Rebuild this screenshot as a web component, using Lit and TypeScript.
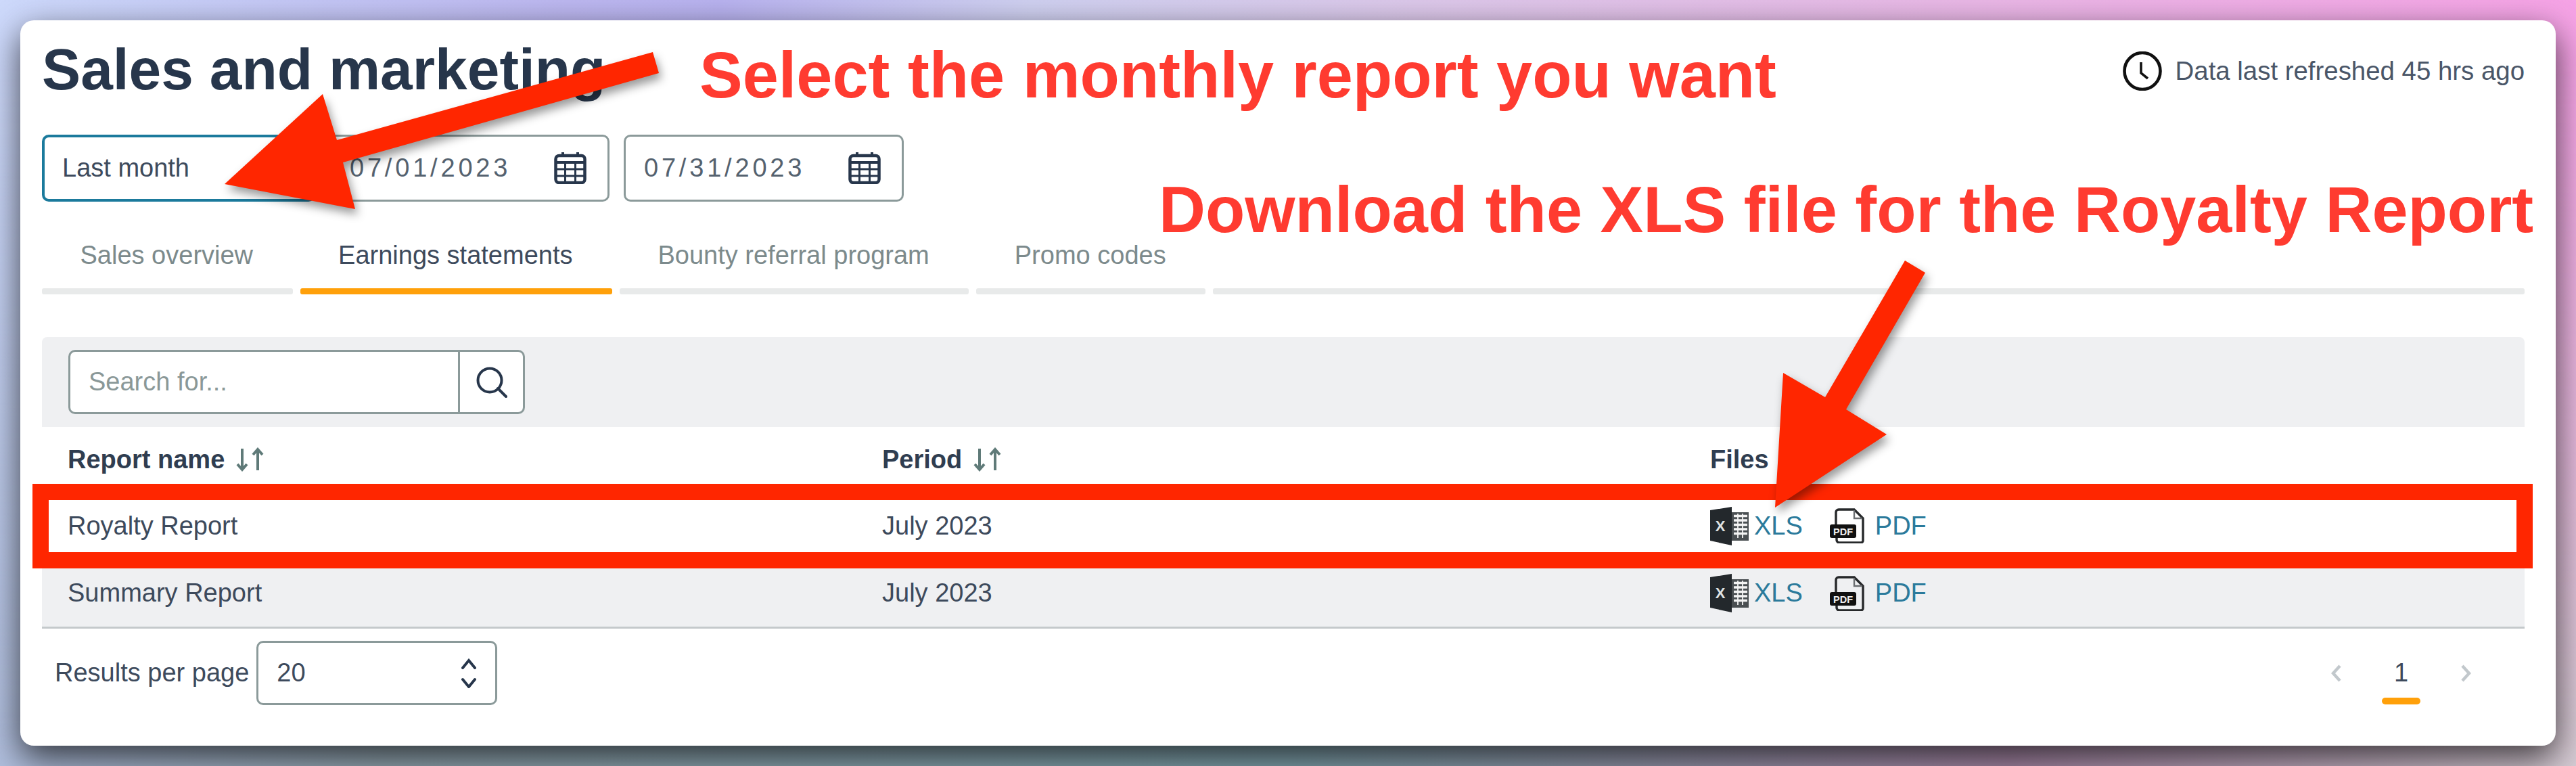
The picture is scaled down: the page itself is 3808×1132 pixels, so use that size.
import { LitElement, html, css, svg } from "lit";
import { customElement } from "lit/decorators.js";

const calendar = html`<svg class="cal" viewBox="0 0 48 47">
  <path d="M13 0v7M35 0v7" stroke="#27364b" stroke-width="4" stroke-linecap="round"/>
  <rect x="2.5" y="5" width="43" height="40" rx="5" fill="#fff" stroke="#27364b" stroke-width="4.5"/>
  <path d="M2 15h44" stroke="#27364b" stroke-width="4"/>
  <path d="M2 25h44M2 35h44M16.500 15v30M31.500 15v30" stroke="#27364b" stroke-width="3"/>
</svg>`;

const sortIcon = html`<svg class="sort" viewBox="0 0 43 36" fill="none" stroke="#5f7a78" stroke-width="4">
  <path d="M10 2v30M3 25l7 8 7-8"/>
  <path d="M33 34V4M26 11l7-8 7 8"/>
</svg>`;

const xlsIcon = html`<svg class="xls" viewBox="0 0 57 57">
  <rect x="30" y="8" width="27" height="42" fill="#4a4f52"/>
  <path d="M35 13.500h20M35 20h20M35 26.500h20M35 33h20M35 39.500h20" stroke="#f4f4f4" stroke-width="3.600"/>
  <path d="M41 10v36M48 10v36" stroke="#f4f4f4" stroke-width="1.800"/>
  <path d="M0 5L32 0V57L0 50Z" fill="#23282c"/>
  <text x="15" y="36" class="xls-x">X</text>
</svg>`;

const pdfIcon = html`<svg class="pdf" viewBox="0 0 51 52">
  <path d="M9 24V6a4 4 0 0 1 4-4h23l13 13v33a3 3 0 0 1-3 3H14a4 4 0 0 1-4-4v-5" fill="none" stroke="#26282a" stroke-width="3.400"/>
  <path d="M36 3v12h12" fill="none" stroke="#6a6d70" stroke-width="2.400"/>
  <rect x="0" y="24" width="39" height="20" rx="3" fill="#111"/>
  <text x="19.500" y="39.500" class="pdf-t">PDF</text>
</svg>`;

const tabs = [
  { label: "Sales overview", active: false },
  { label: "Earnings statements", active: true },
  { label: "Bounty referral program", active: false },
  { label: "Promo codes", active: false },
];

const rows = [
  { name: "Royalty Report", period: "July 2023" },
  { name: "Summary Report", period: "July 2023" },
];

const arrows = svg`
  <polygon points="965,77 974,108 507,240 525,309 332,272 477,139 498,207"/>
  <polygon points="2816,385 2846,403 2729,605 2789,642 2624,750 2636,551 2698,587"/>
`;

@customElement("app-root")
export class AppRoot extends LitElement {
  static styles = css`
    :host {
      display: block;
      position: relative;
      width: 3808px;
      height: 1132px;
      box-sizing: border-box;
      padding: 30px;
      overflow: hidden;
      font-family: "Liberation Sans", Arial, sans-serif;
      font-size: 38px;
      color: #3d4a5c;
      background: linear-gradient(90deg, #b0bedd 0%, #95a9b4 15%, #80a4ae 50%, #a889a8 78%, #d6ccd4 100%);
    }
    :host::before {
      content: "";
      position: absolute;
      inset: 0;
      background: linear-gradient(90deg, #cdd9fb 0%, #bcb7f0 22%, #b8b2ef 28%, #cfd0f0 40%, #dcc8ea 55%, #e8b8e6 75%, #f6a3e6 100%);
      -webkit-mask-image: linear-gradient(180deg, #000 8%, transparent 100%);
      mask-image: linear-gradient(180deg, #000 8%, transparent 100%);
    }
    .card {
      position: relative;
      box-sizing: border-box;
      height: 1072px;
      background: #fff;
      border-radius: 20px;
      padding: 0 46px 0 32px;
      box-shadow: 0 18px 50px rgba(0, 0, 0, 0.7);
    }
    .head {
      display: flex;
      justify-content: space-between;
      align-items: flex-start;
      height: 169px;
    }
    h1 {
      margin: 30px 0 0;
      font-size: 85.7px;
      line-height: 1;
      font-weight: 700;
      color: #27364b;
    }
    .refreshed {
      display: flex;
      align-items: center;
      gap: 20px;
      margin-top: 46px;
      line-height: 54px;
      font-size: 38.4px;
      color: #4a5668;
    }
    .clock { width: 58px; height: 58px; }
    .filters { display: flex; gap: 21px; }
    .field {
      box-sizing: border-box;
      height: 99px;
      border: 3px solid #8b9a9a;
      border-radius: 10px;
      display: flex;
      align-items: center;
      background: #fff;
    }
    .field.select { width: 404px; padding-left: 26px; border: 4px solid #1b7a9c; }
    .field.date {
      width: 414px;
      padding: 0 31px 0 27px;
      justify-content: space-between;
      letter-spacing: 4.8px;
      color: #55626f;
    }
    .cal { width: 48px; height: 47px; }
    .tabs { display: flex; gap: 11px; margin-top: 57px; }
    .tab { flex: none; padding: 0 58.5px 0 56.5px; }
    .tab.fill { flex: 1; padding: 0; }
    .tab .label { line-height: 44px; padding-bottom: 27px; color: #7c8a8c; height: 44px; white-space: nowrap; }
    .tab.on .label { color: #3d4a5c; }
    .tabs > div { display: flex; flex-direction: column; }
    .bar { height: 9px; border-radius: 3px; background: #e8eaea; margin: 0 -58.5px 0 -56.5px; }
    .tab.fill .bar { margin: 71px 0 0; }
    .tab.on .bar { background: #ffa00a; }
    .toolbar {
      margin-top: 63px;
      height: 133px;
      box-sizing: border-box;
      padding: 19px 39px;
      background: #eff0f2;
      border-radius: 8px 8px 0 0;
    }
    .search {
      box-sizing: border-box;
      display: flex;
      width: 675px;
      height: 95px;
      border: 3px solid #8b9a9a;
      border-radius: 10px;
      background: #fff;
    }
    .search .ph {
      flex: 1;
      display: flex;
      align-items: center;
      padding-left: 27px;
      color: #8a9898;
    }
    .search .btn {
      width: 93px;
      border-left: 3px solid #8b9a9a;
      display: flex;
      align-items: center;
      justify-content: center;
    }
    .mag { width: 46px; height: 46px; }
    .row {
      display: grid;
      grid-template-columns: 1204px 1224px 1fr;
      align-items: center;
      padding-left: 38px;
      height: 100px;
    }
    .row.th { height: 96px; font-weight: 700; color: #2f3d50; }
    .row.alt { background: #eff0f2; height: 99px; }
    .row.last { border-bottom: 3px solid #c4c9cb; }
    .th-cell { display: flex; align-items: center; gap: 16px; }
    .sort { width: 43px; height: 36px; }
    .files { display: flex; align-items: center; color: #2b7a9b; }
    .files a { display: flex; align-items: center; }
    .xls { width: 57px; height: 57px; margin-right: 8px; }
    .pdf { width: 51px; height: 52px; margin: 0 16px 0 40px; }
    .xls-x { font: 700 22px "Liberation Sans", sans-serif; fill: #dfe2e2; text-anchor: middle; }
    .pdf-t { font: 700 14.5px "Liberation Sans", sans-serif; fill: #f0f0f0; text-anchor: middle; }
    .foot {
      display: flex;
      align-items: flex-start;
      padding: 18px 79px 0 19px;
    }
    .foot .lbl { line-height: 95px; margin-right: 11px; }
    .per {
      box-sizing: border-box;
      width: 356px;
      height: 95px;
      border: 3px solid #8b9a9a;
      border-radius: 10px;
      display: flex;
      align-items: center;
      justify-content: space-between;
      padding: 0 27px 0 27px;
    }
    .updown { width: 24px; height: 44px; }
    .pager { margin-left: auto; display: flex; align-items: flex-start; gap: 60px; padding-top: 24px; }
    .chev { width: 15px; height: 26px; margin-top: 11px; }
    .page { width: 57px; display: flex; flex-direction: column; align-items: center; }
    .page .num { line-height: 46px; height: 46px; color: #3d4a5c; }
    .page .ul { width: 57px; height: 10px; border-radius: 5px; background: #ffa00a; margin-top: 14px; }
    .redbox {
      position: absolute;
      left: 48px;
      top: 715px;
      width: 3696px;
      height: 125px;
      box-sizing: border-box;
      border: 24px solid #ff2600;
    }
    .arrows {
      position: absolute;
      left: 0;
      top: 0;
      width: 3808px;
      height: 1132px;
      fill: #ff2600;
      filter: drop-shadow(4px 8px 7px rgba(0, 0, 0, 0.4));
    }
    .note {
      position: absolute;
      font-size: 95.5px;
      font-weight: 700;
      line-height: 1;
      color: #ff3b30;
      white-space: nowrap;
    }
    .note.one { left: 1034px; top: 64px; }
    .note.two { left: 1713px; top: 263px; }
  `;

  render() {
    return html`
      <div class="card">
        <div class="head">
          <h1>Sales and marketing</h1>
          <div class="refreshed">
            <svg class="clock" viewBox="0 0 58 58" fill="none" stroke="#111" stroke-width="4.6">
              <ellipse cx="29" cy="29" rx="26.5" ry="27"/>
              <path d="M27 16v16l10 8" stroke-width="3.6"/>
            </svg>
            <span>Data last refreshed 45 hrs ago</span>
          </div>
        </div>
        <div class="filters">
          <div class="field select">Last month</div>
          <div class="field date"><span>07/01/2023</span>${calendar}</div>
          <div class="field date"><span>07/31/2023</span>${calendar}</div>
        </div>
        <div class="tabs">
          ${tabs.map(
            (t) => html`<div class="tab ${t.active ? "on" : ""}">
              <div class="label">${t.label}</div>
              <div class="bar"></div>
            </div>`
          )}
          <div class="tab fill"><div class="bar"></div></div>
        </div>
        <div class="toolbar">
          <div class="search">
            <div class="ph">Search for...</div>
            <div class="btn">
              <svg class="mag" viewBox="0 0 46 46" fill="none" stroke="#27364b" stroke-width="4">
                <circle cx="20" cy="20" r="17.5"/>
                <path d="M32 32l12 12" stroke-linecap="round"/>
              </svg>
            </div>
          </div>
        </div>
        <div class="row th">
          <div class="th-cell">Report name ${sortIcon}</div>
          <div class="th-cell">Period ${sortIcon}</div>
          <div>Files</div>
        </div>
        ${rows.map(
          (r, i) => html`<div class="row ${i % 2 ? "alt last" : ""}">
            <div>${r.name}</div>
            <div>${r.period}</div>
            <div class="files">
              <a>${xlsIcon}XLS</a>
              <a>${pdfIcon}PDF</a>
            </div>
          </div>`
        )}
        <div class="foot">
          <span class="lbl">Results per page</span>
          <div class="per">
            <span>20</span>
            <svg class="updown" viewBox="0 0 24 44" fill="none" stroke="#27364b" stroke-width="4" stroke-linecap="round">
              <path d="M3 14L12 3l9 11M3 31l9 11 9-11"/>
            </svg>
          </div>
          <div class="pager">
            <svg class="chev" viewBox="0 0 15 26" fill="none" stroke="#c2c8cc" stroke-width="4.5"><path d="M13 2L3 13l10 11"/></svg>
            <div class="page"><span class="num">1</span><span class="ul"></span></div>
            <svg class="chev" viewBox="0 0 15 26" fill="none" stroke="#c2c8cc" stroke-width="4.5"><path d="M2 2l10 11L2 24"/></svg>
          </div>
        </div>
      </div>
      <div class="redbox"></div>
      <svg class="arrows" viewBox="0 0 3808 1132">${arrows}</svg>
      <div class="note one">Select the monthly report you want</div>
      <div class="note two">Download the XLS file for the Royalty Report</div>
    `;
  }
}
